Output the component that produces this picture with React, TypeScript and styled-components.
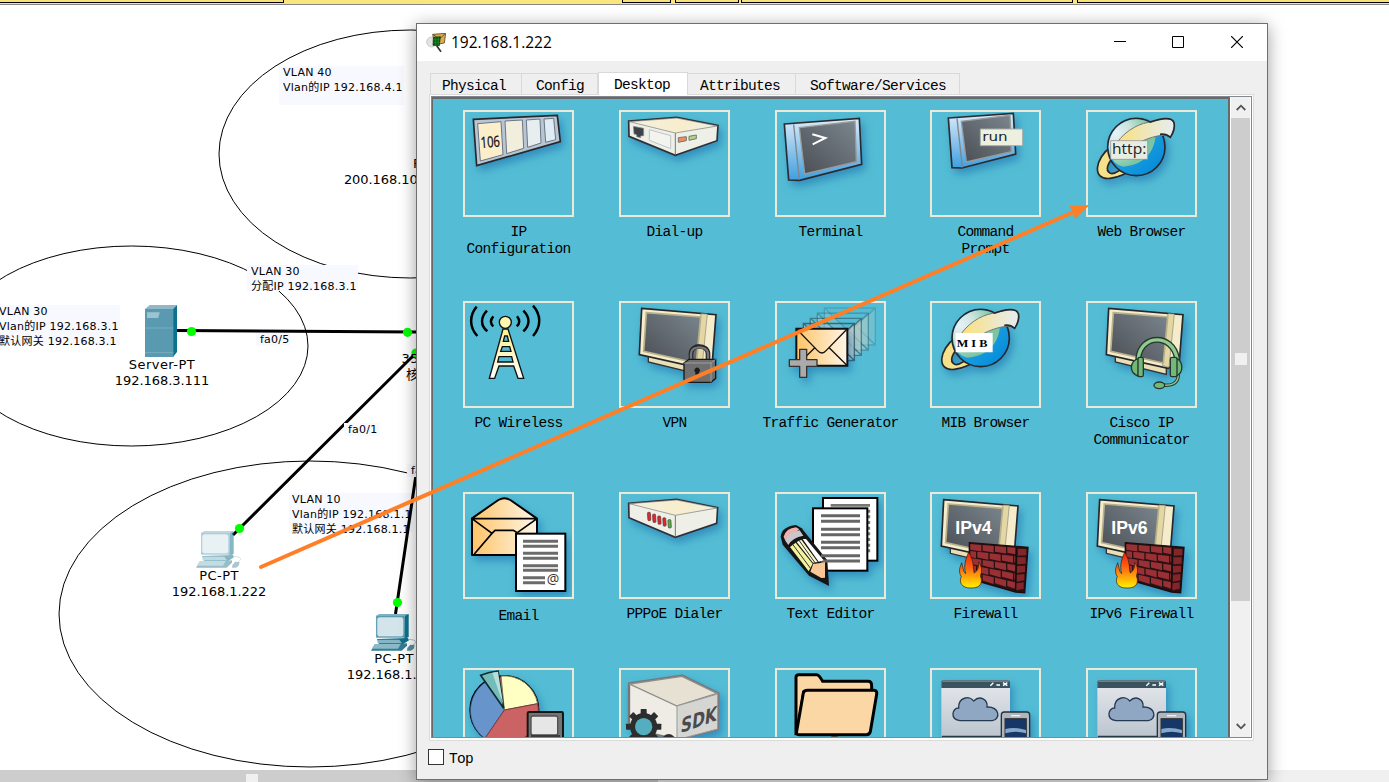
import React from "react";
import styled, { createGlobalStyle } from "styled-components";

const Global = createGlobalStyle`
  * { box-sizing: border-box; }
  html, body { margin: 0; padding: 0; background: #fff; overflow: hidden; }
  svg { display: block; }
`;

const mono = `"Liberation Mono", "Noto Sans CJK SC", monospace`;
const sans = `"DejaVu Sans", "Noto Sans CJK SC", sans-serif`;

const Screen = styled.div`
  position: relative;
  width: 1389px;
  height: 782px;
  overflow: hidden;
  background: #fff;
  display: flex;
  flex-direction: column;
`;

/* ---------- workspace chrome ---------- */
const TopStrip = styled.div`
  display: flex;
  height: 5px;
  flex: none;
  background: #fae57f;
  border-bottom: 1px solid #868686;
`;
const StripSegment = styled.div<{ $w?: number; $gap: number; $left?: boolean }>`
  ${(p) => (p.$w ? `width: ${p.$w}px;` : "flex: 1;")}
  height: 3px;
  margin-right: ${(p) => p.$gap}px;
  background: #f8e07b;
  border-bottom: 1px solid #000;
  border-right: ${(p) => (p.$w ? "1px solid #000" : "none")};
  border-left: ${(p) => (p.$left ? "1px solid #000" : "none")};
`;
const Canvas = styled.div`
  flex: 1;
`;
const BottomScroll = styled.div`
  height: 12px;
  flex: none;
  display: flex;
  background: #f0f0f0;
`;
const BottomThumb = styled.div`
  width: 658px;
  background: #cdcdcd;
  padding: 4px 0 0 246px;
`;
const Grip = styled.div`
  width: 12px;
  height: 12px;
  background: #f0f0f0;
`;

/* ---------- topology ---------- */
const Diagram = styled.svg`
  position: absolute;
  left: 0;
  top: 0;
`;
const Note = styled.div<{ $x: number; $y: number; $w: number; $h: number; $pad?: number }>`
  position: absolute;
  left: ${(p) => p.$x}px;
  top: ${(p) => p.$y}px;
  width: ${(p) => p.$w}px;
  height: ${(p) => p.$h}px;
  padding-left: ${(p) => p.$pad ?? 4}px;
  background: #f8f8ff;
  color: #000;
  font: 11px/15px ${sans};
  letter-spacing: 0.24px;
  white-space: pre;
  & > span {
    display: block;
    margin-top: -1px;
  }
`;
const DeviceName = styled.div<{ $x: number; $y: number; $tight?: boolean }>`
  position: absolute;
  left: ${(p) => p.$x - 70}px;
  top: ${(p) => p.$y}px;
  width: 140px;
  text-align: center;
  color: #000;
  font: 13px/16px ${sans};
  letter-spacing: -0.05px;
  white-space: pre;
  &::first-line {
    letter-spacing: ${(p) => (p.$tight ? "-0.05px" : "0.45px")};
  }
`;
const DeviceIcon = styled.svg<{ $x: number; $y: number; $faded?: boolean }>`
  position: absolute;
  left: ${(p) => p.$x}px;
  top: ${(p) => p.$y}px;
  opacity: ${(p) => (p.$faded ? 0.5 : 1)};
`;

/* ---------- device window ---------- */
const Window = styled.div`
  position: absolute;
  left: 416px;
  top: 23px;
  width: 852px;
  height: 757px;
  border: 1px solid #6f6f6f;
  background: #efefef;
  box-shadow: 0 3px 16px rgba(0, 0, 0, 0.38);
  display: flex;
  flex-direction: column;
`;
const TitleBar = styled.div`
  display: flex;
  align-items: center;
  height: 37px;
  flex: none;
  background: #fff;
  padding-left: 9px;
`;
const Title = styled.div`
  flex: 1;
  padding: 0 0 2px 5px;
  font: 15.5px/20px "Open Sans", "Noto Sans", sans-serif;
  color: #000;
`;
const WindowButton = styled.div<{ $w: number }>`
  width: ${(p) => p.$w}px;
  display: flex;
  justify-content: center;
  padding-bottom: 1px;
`;
const Body = styled.div`
  flex: 1;
  display: flex;
  flex-direction: column;
  padding: 11px 13px 0 12px;
`;
const Tabs = styled.div`
  display: flex;
  align-items: flex-end;
  height: 23px;
  margin-bottom: -1px;
  padding-left: 1px;
  position: relative;
`;
const Tab = styled.div<{ $w: number; $active?: boolean; $first?: boolean; $indent: number }>`
  width: ${(p) => p.$w}px;
  height: ${(p) => (p.$active ? 23 : 21)}px;
  background: ${(p) => (p.$active ? "#fff" : "#efefef")};
  border: 1px solid #d9d9d9;
  border-bottom: none;
  ${(p) => (p.$active || p.$first ? "" : "border-left: none;")}
  margin-bottom: ${(p) => (p.$active ? 0 : 1)}px;
  padding-left: ${(p) => p.$indent}px;
  font: 14.5px/${(p) => (p.$active ? 25 : 24)}px ${mono};
  letter-spacing: -0.7px;
  color: #000;
`;
const Pane = styled.div`
  height: 647px;
  border: 1px solid #dcdcdc;
  background: #fff;
  padding: 1px 1px 2px;
  display: flex;
`;
const ScrollFrame = styled.div`
  flex: 1;
  display: flex;
  border: 1px solid #828790;
`;
const Viewport = styled.div`
  width: 798px;
  overflow: hidden;
  background: #54bdd5;
  border: solid #696969;
  border-width: 2px 2px 0 1px;
`;
const AppGrid = styled.div`
  display: grid;
  grid-template-columns: 156px 156px 155px 156px 111px;
  grid-template-rows: 191px 191px 176px 191px;
  padding: 11px 0 0 30px;
`;
const AppTile = styled.div`
  width: 111px;
`;
const IconBox = styled.div`
  width: 111px;
  height: 107px;
  border: 2px solid #ece9d8;
`;
const AppLabel = styled.div<{ $drop?: boolean }>`
  margin: ${(p) => (p.$drop ? 9 : 7)}px -20px 0;
  text-align: center;
  white-space: pre;
  font: 14.5px/17px ${mono};
  letter-spacing: -0.7px;
  color: #000;
`;
const ScrollBar = styled.div`
  flex: 1;
  display: flex;
  flex-direction: column;
  margin: 0 1px;
  background: #f0f0f0;
`;
const ScrollButton = styled.div`
  height: 21px;
  display: flex;
  align-items: center;
  justify-content: center;
`;
const ScrollThumb = styled.div`
  height: 483px;
  display: flex;
  align-items: center;
  justify-content: center;
  padding-bottom: 2px;
  background: #cdcdcd;
`;
const Spacer = styled.div`
  flex: 1;
`;
const Footer = styled.label`
  display: flex;
  align-items: flex-start;
  height: 16px;
  margin-top: 8px;
  margin-left: -1px;
  gap: 5px;
  font: 14.5px/20px ${mono};
  letter-spacing: -0.7px;
  color: #000;
`;
const CheckBox = styled.span`
  width: 16px;
  height: 16px;
  border: 1px solid #333;
  background: #fff;
`;
const Arrow = styled.svg`
  position: absolute;
  left: 0;
  top: 0;
`;

/* ---------- application drawings ---------- */
const Shaded = styled.g`
  filter: drop-shadow(9px 14px 12px rgba(16, 94, 165, 0.5));
`;
const Defs = styled.svg`
  position: absolute;
`;

const Art = ({ box, children }: { box: string; children: React.ReactNode }) => (
  <svg width="107" height="103" viewBox={box}>{children}</svg>
);

const Gradients = () => (
  <Defs width="0" height="0">
    <defs>
      <linearGradient id="cream" x1="0" y1="0" x2="1" y2="0.3"><stop offset="0" stopColor="#fdeec4" /><stop offset="1" stopColor="#e6f0f6" /></linearGradient>
      <linearGradient id="creamTop" x1="0" y1="0" x2="1" y2="0"><stop offset="0" stopColor="#f4f1e2" /><stop offset=".6" stopColor="#f8edcc" /><stop offset="1" stopColor="#eef1e6" /></linearGradient>
      <linearGradient id="screen" x1="0" y1="1" x2="1" y2="0"><stop offset="0" stopColor="#4b4e54" /><stop offset="1" stopColor="#7b868e" /></linearGradient>
      <linearGradient id="blueEdge" x1="0" y1="0" x2="0" y2="1"><stop offset="0" stopColor="#dcebf8" /><stop offset="1" stopColor="#3f9fe0" /></linearGradient>
      <linearGradient id="ocean" x1="0" y1="0" x2="1" y2="1"><stop offset="0" stopColor="#35b3e6" /><stop offset="1" stopColor="#0087d8" /></linearGradient>
      <radialGradient id="land" cx=".15" cy=".3" r=".9"><stop offset="0" stopColor="#e7f1f8" /><stop offset=".35" stopColor="#cbe4dd" /><stop offset=".8" stopColor="#7cc5a2" /></radialGradient>
      <linearGradient id="ring" x1="0" y1="0" x2="1" y2="0"><stop offset="0" stopColor="#fbe07c" /><stop offset="1" stopColor="#e4edf3" /></linearGradient>
      <linearGradient id="tower" x1="0" y1="0" x2="0" y2="1"><stop offset="0" stopColor="#fff18c" /><stop offset="1" stopColor="#ffffff" /></linearGradient>
      <linearGradient id="letter" x1="0" y1="0" x2="1" y2="0"><stop offset="0" stopColor="#ffc468" /><stop offset="1" stopColor="#fff6e8" /></linearGradient>
      <linearGradient id="flame" x1="0" y1="0" x2="0" y2="1"><stop offset="0" stopColor="#f51c0c" /><stop offset=".45" stopColor="#ff6a10" /><stop offset="1" stopColor="#fff200" /></linearGradient>
      <linearGradient id="page" x1="0" y1="0" x2="0" y2="1"><stop offset="0" stopColor="#e6e9ed" /><stop offset="1" stopColor="#bcc5cf" /></linearGradient>
    </defs>
  </Defs>
);

const IpConfiguration = () => (
  <Art box="105 51 321 309">
    <Shaded><path d="M130 73 382 61 391 140 140 212Z" fill="#b8c6d4" stroke="#28282c" strokeWidth="5" /></Shaded>
    <g stroke="#6b7684" strokeWidth="3">
      <path d="M143 86 213 80 219 179 151 198Z" fill="#fbeecb" /><path d="M225 78 277 75 281 160 230 176Z" fill="#f1eedd" /><path d="M289 75 330 72 333 144 293 157Z" fill="#e6eeef" /><path d="M342 72 371 70 377 134 347 142Z" fill="#dfebf5" />
    </g>
    <text x="0" y="0" transform="translate(153 159) rotate(-4) scale(.73 1)" fontFamily="Open Sans, sans-serif" fontSize="46" fill="#111" stroke="#111">106</text>
  </Art>
);

const Modem = ({ dialer }: { dialer?: boolean }) => (
  <Art box={dialer ? "573 42 321 309" : "573 51 321 309"}>
    <Shaded>
      <path d={dialer ? "M596 70 740 58 863 83 860 130 736 172 597 113Z" : "M596 78 740 67 864 91 861 137 736 181 597 124Z"} fill="#eef0e8" stroke="#303034" strokeWidth="5" />
    </Shaded>
    {dialer ? (
      <>
        <path d="M598 71 740 60 861 84 736 106Z" fill="url(#creamTop)" stroke="#777" strokeWidth="2" />
        <path d="M736 106V170" stroke="#777" strokeWidth="3" />
        {[0, 1, 2, 3, 4].map((i) => <rect key={i} x={653 + i * 15.3} y={97 + i * 5.5} width="9" height="25" rx="3" fill={i === 4 ? "#43b649" : "#dc2831"} stroke="#5c3230" strokeWidth="2" transform={`rotate(-4 ${657 + i * 15} ${110 + i * 5})`} />)}
      </>
    ) : (
      <>
        <path d="M598 80 740 69 862 93 736 114Z" fill="url(#creamTop)" stroke="#777" strokeWidth="2" />
        <path d="M736 114V178" stroke="#777" strokeWidth="3" />
        <path d="M610 94 641 100V122L632 123V128L620 125V119L612 117Z" fill="#3c4248" stroke="#8c9196" strokeWidth="2" />
        <path d="M658 104 722 122V161L658 136Z" fill="#f3f4ee" stroke="#bfc4c8" strokeWidth="3" />
        <path d="M745 128 769 125V137L745 142Z" fill="#f18b58" stroke="#777" strokeWidth="3" />
        <path d="M777 124 799 120V131L777 136Z" fill="#aed581" stroke="#777" strokeWidth="3" />
      </>
    )}
  </Art>
);

const Terminal = () => (
  <Art box="81 51 321 309">
    <Shaded><path d="M103 87 328 70 335 208 149 256 116 255Z" fill="url(#blueEdge)" stroke="#2b2c30" strokeWidth="5" /></Shaded>
    <path d="M131 88 148 254" stroke="#7d8690" strokeWidth="4" />
    <path d="M148 98 315 79 319 200 164 237Z" fill="url(#screen)" stroke="#9a9a9a" strokeWidth="4" />
    <path d="M187 118 226 129 188 148" fill="none" stroke="#fff" strokeWidth="6" />
  </Art>
);

const CommandPrompt = () => (
  <Art box="546 51 321 309">
    <Shaded><path d="M595 69 790 55 797 177 636 219 606 218Z" fill="url(#blueEdge)" stroke="#2b2c30" strokeWidth="5" /></Shaded>
    <path d="M621 70 637 217" stroke="#7d8690" strokeWidth="4" />
    <path d="M634 79 780 61 784 170 649 201Z" fill="url(#screen)" stroke="#9a9a9a" strokeWidth="4" />
    <path d="M691 102H818V152H691Z" fill="#edf0df" stroke="#a7aca8" strokeWidth="3" />
    <text x="697" y="138" fontFamily="DejaVu Sans, sans-serif" fontSize="38" fill="#222" textLength="76" lengthAdjust="spacingAndGlyphs">run</text>
  </Art>
);

const Globe = ({ mib }: { mib?: boolean }) => (
  <Art box={mib ? "83 291 321 309" : "84 291 321 309"}>
    <Shaded>
      <path d="M152 396C105 430 94 496 150 490 176 487 202 474 220 460L211 440C190 460 166 480 151 475 132 466 147 437 164 424Z" fill="#f6e08a" stroke="#26282c" strokeWidth="5" />
      <circle cx="229" cy="396" r="86" fill="url(#ocean)" stroke="#26282c" strokeWidth="5" />
    </Shaded>
    <path d="M146 396A83 83 0 0 1 284 334C296 385 268 450 190 455 162 450 147 425 146 396Z" fill="url(#land)" />
    <path d="M170 384C200 342 245 322 276 321 306 309 336 305 342 323 346 339 338 356 331 367 319 353 270 365 235 384Z" fill="url(#ring)" stroke="#777" strokeWidth="3" />
    <path d="M268 322C306 309 336 305 342 323 346 339 338 356 331 367 320 357 308 357 300 358" fill="none" stroke="#26282c" strokeWidth="5" />
    {mib ? (
      <><path d="M154 381H265V439H154Z" fill="#fff" /><text x="157" y="422" fontFamily="Liberation Serif, serif" fontWeight="700" fontSize="33" textLength="92" lengthAdjust="spacingAndGlyphs">M I B</text></>
    ) : (
      <><path d="M152 377H263V433H152Z" fill="#edf0e4" fillOpacity=".93" stroke="#889" strokeWidth="2" /><text x="156" y="417" fontFamily="Open Sans, sans-serif" fontSize="43" fill="#222" textLength="103" lengthAdjust="spacingAndGlyphs">http:</text></>
    )}
  </Art>
);

const PcWireless = () => (
  <Art box="105 39 321 309">
    <g fill="none" stroke="#000" strokeWidth="7.5">
      <path d="M140 50C118 76 117 111 142 138M171 62C151 82 151 107 172 124M190 79C180 90 181 101 190 109M309 47C334 75 334 110 309 138M280 62C301 82 300 106 280 124M261 79C270 90 270 101 260 109" />
    </g>
    <path fillRule="evenodd" d="M219 117H234L281 265H264L251 228H207L194 265H178ZM224 138 220 154H236L232 138ZM217 170 212 184H243L239 170ZM207 200 203 216H249L245 200Z" fill="url(#tower)" stroke="#111" strokeWidth="4" />
    <circle cx="226" cy="97" r="18" fill="#fff7b1" stroke="#111" strokeWidth="4" />
  </Art>
);

const Monitor = () => (
  <>
    <path d="M87 194 L87 216 240 253 240 225Z" fill="#e9dfb4" stroke="#333" strokeWidth="4" />
    <path d="M67 55 290 74 279 215 245 235 60 194Z" fill="#f4ecca" stroke="#26282c" strokeWidth="5" />
    <path d="M264 72 248 232 228 226 245 71Z" fill="#e3d7a4" stroke="#8c8672" strokeWidth="2" />
    <path d="M81 68 244 81 231 219 73 184Z" fill="url(#screen)" stroke="#b8af8b" strokeWidth="5" />
  </>
);

const Vpn = () => (
  <Art box="573 39 321 309">
    <Shaded><g transform="translate(568)"><Monitor /></g>
      <path d="M783 218V190C785 162 831 163 834 190V218" fill="none" stroke="#26282c" strokeWidth="14" />
      <path d="M783 218V190C785 166 831 166 834 190V218" fill="none" stroke="#777" strokeWidth="7" />
      <path d="M762 219 777 208H857V265L843 277H762Z" fill="#6f6f70" stroke="#18191b" strokeWidth="4" />
    </Shaded>
    <path d="M762 219H843V277M843 219 857 208" fill="none" stroke="#b8b8b8" strokeWidth="2" />
    <path d="M796 247A8 8 0 1 1 807 247L808 263H797Z" fill="#1c1c1c" />
  </Art>
);

const TrafficGenerator = () => (
  <Art box="81 39 321 309">
    {[4, 3, 2, 1].map((i) => (
      <g key={i} transform={`translate(${i * 21} ${-i * 15.5})`} opacity={1 - i * 0.19} fill="#bfcfc8" stroke="#2e5663" strokeWidth="4">
        <path d="M139 116H292V227H139ZM139 116 215 189 292 116M238 174 292 227" />
      </g>
    ))}
    <Shaded>
      <path d="M139 116H292V227H139Z" fill="url(#letter)" stroke="#111" strokeWidth="6" />
      <path d="M139 116 202 181Q216 197 229 181L292 116M139 227 196 172M236 172 292 227" fill="none" stroke="#111" strokeWidth="4" />
      <path d="M149 178H170V209H201V229H170V262H149V229H118V209H149Z" fill="#aaa" stroke="#333" strokeWidth="4" strokeLinejoin="round" />
    </Shaded>
  </Art>
);

const CiscoCommunicator = () => (
  <Art box="1014 39 321 309">
    <Shaded><g transform="translate(1009)"><Monitor /></g></Shaded>
    <g fill="none" stroke="#26382b" strokeLinecap="round">
      <path d="M1165 205C1172 132 1268 130 1281 205" strokeWidth="18" />
      <path d="M1165 205C1172 132 1268 130 1281 205" stroke="#8fca90" strokeWidth="10" />
      <path d="M1285 256C1283 283 1262 288 1235 285" strokeWidth="10" />
      <path d="M1285 256C1283 283 1262 288 1235 285" stroke="#8fca90" strokeWidth="4" />
    </g>
    <g fill="#72b878" stroke="#26382b" strokeWidth="4">
      <path d="M1166 205C1138 214 1136 248 1165 259Z" /><rect x="1164" y="202" width="16" height="58" rx="5" />
      <path d="M1279 205C1300 214 1302 248 1279 258Z" /><rect x="1261" y="202" width="20" height="58" rx="5" />
      <ellipse cx="1228" cy="286" rx="16" ry="10" />
    </g>
  </Art>
);

const Email = () => (
  <Art box="105 42 321 309">
    <Shaded>
      <path d="M126 115 205 60Q223 50 241 60L321 116V225H126Z" fill="url(#letter)" stroke="#000" strokeWidth="6" strokeLinejoin="round" />
      <path d="M126 116H321M126 116 186 160 133 222M186 160 195 151H250L262 158M321 116 262 158" fill="none" stroke="#000" strokeWidth="5" />
      <rect x="258" y="161" width="148" height="172" fill="#fff" stroke="#000" strokeWidth="6" />
    </Shaded>
    <path d="M279 184H384M279 199H384M279 220H384M279 235H384M279 257H384M279 271H384M279 293H345M279 308H345" stroke="#6b6b6b" strokeWidth="9" />
    <text x="350" y="313" fontFamily="Open Sans, sans-serif" fontSize="42" fill="#333">@</text>
  </Art>
);

const TextEditor = () => (
  <Art box="51 42 321 309">
    <Shaded>
      <rect x="189" y="54" width="163" height="188" fill="#fff" stroke="#000" strokeWidth="6" />
      <path d="M212 76H330" stroke="#777" strokeWidth="8" />
      <path d="M327 89V222" stroke="#777" strokeWidth="7" strokeDasharray="9 8" />
      <rect x="159" y="85" width="163" height="187" fill="#fff" stroke="#000" strokeWidth="6" />
      <path d="M62 170Q65 140 108 135L125 145 202 241 207 318 147 287 68 194Z" fill="#151515" />
    </Shaded>
    <path d="M183 107H300M183 124H300M183 148H300M183 164H300M183 187H300M183 203H300M183 227H300M183 243H300" stroke="#666" strokeWidth="9" />
    <path d="M71 170Q78 145 108 142L118 148 76 182Z" fill="#efb1b0" />
    <path d="M76 182Q87 157 119 151L130 167Q98 172 85 195Z" fill="#c8c8cc" />
    <path d="M90 201 107 188 158 251 146 274Z" fill="#f4f39e" />
    <path d="M110 186 124 179 173 246 159 248Z" fill="#fcfacc" />
    <path d="M128 177 138 177 191 241 176 245Z" fill="#fff" />
    <path d="M151 275 160 251Q177 251 195 246L195 293 184 294Z" fill="#f8c795" />
    <path d="M98 193 153 267M117 181 167 251" stroke="#333" strokeWidth="3" />
  </Art>
);

const Bricks = () => (
  <>
    <path d="M628 188 804 202 794 338 767 336 628 296Z" fill="#2a1213" stroke="#1a0d0e" strokeWidth="4" />
    {[0, 1, 2, 3, 4].map((r) =>
      [0, 1, 2, 3, 4].map((c) => {
        const x = 631 + c * 37 - (r % 2 ? 16 : 0);
        const left = Math.max(631, x);
        const right = Math.min(766, x + 33);
        if (right <= left) return null;
        const y = (v: number) => 192 + r * (21 + ((v - 631) / 136) * 5) + ((v - 631) / 136) * 11;
        return <path key={`${r}-${c}`} d={`M${left} ${y(left)}L${right} ${y(right)}V${y(right) + 20}L${left} ${y(left) + 17}Z`} fill="#993035" />;
      })
    )}
    {[0, 1, 2, 3, 4].map((r) => <path key={r} d={`M${773 - r} ${206 + r * 26}L${799 - r * 2} ${207 + r * 25}V${226 + r * 25}L${773 - r} ${227 + r * 26}Z`} fill="#842529" />)}
    <path d="M770 203 766 334" stroke="#111" strokeWidth="4" />
  </>
);

const Firewall = ({ version }: { version: string }) => (
  <Art box="516 42 321 309">
    <Shaded><g transform="translate(484 4)"><Monitor /></g><Bricks /></Shaded>
    <text x="586" y="162" fontFamily="Liberation Sans, sans-serif" fontWeight="700" fontSize="53" fill="#fff" textLength="109" lengthAdjust="spacingAndGlyphs">{version}</text>
    <path d="M626 216C617 240 610 253 617 281 609 276 609 259 605 248 600 262 594 274 604 290 596 305 604 325 633 324 666 325 668 303 661 288 668 270 664 256 656 247 657 265 651 273 643 279 638 264 644 246 626 216Z" fill="url(#flame)" stroke="#2d1607" strokeWidth="2" />
  </Art>
);

const Pie = () => (
  <Art box="0 0 321 309">
    <Shaded><circle cx="118" cy="120" r="102" fill="#b95b5d" stroke="#000" strokeWidth="6" /></Shaded>
    <path d="M118 120 60 205A102 102 0 0 1 66 34Z" fill="#6795cb" stroke="#355b8b" strokeWidth="2" />
    <path d="M118 120 108 18A102 102 0 0 1 218 101Z" fill="#ffffc4" stroke="#777750" strokeWidth="3" />
    <path d="M118 120 218 101A102 102 0 0 1 60 205Z" fill="#cb6365" stroke="#773a3a" strokeWidth="3" />
    <path d="M47 16Q72 5 99 3L116 115Z" fill="#73bcb9" stroke="#102d30" strokeWidth="5" /><path d="M82 8 99 5 115 105Z" fill="#b6dedb" />
    <rect x="188" y="126" width="106" height="90" rx="4" fill="#737373" stroke="#161616" strokeWidth="6" />
    <rect x="198" y="138" width="80" height="57" rx="6" fill="#e6e6e6" stroke="#505050" strokeWidth="4" />
    <path d="M198 198H285" stroke="#333" strokeWidth="5" />
  </Art>
);

const Sdk = () => (
  <Art box="0 0 321 309">
    <Shaded><path d="M24 40 183 17 292 70 290 178 168 209 24 175Z" fill="#eeece5" stroke="#77777a" strokeWidth="7" strokeLinejoin="round" /></Shaded>
    <path d="M26 42 183 19 288 70 168 108Z" fill="#e7e1d3" stroke="#8e8d89" strokeWidth="4" />
    <path d="M168 108 290 72V177L168 209Z" fill="#d5d5d2" stroke="#999" strokeWidth="3" />
    <text transform="matrix(1 -.36 -.1 1 178 190)" fontFamily="DejaVu Sans, sans-serif" fontWeight="700" fontSize="62" fill="#4b4b4d" textLength="108" lengthAdjust="spacingAndGlyphs">SDK</text>
    <g fill="#2c2d2f" transform="translate(68 170)">
      {[0, 45, 90, 135].map((a) => <rect key={a} x="-9" y="-53" width="18" height="106" rx="2" transform={`rotate(${a})`} />)}
      <circle r="41" /><circle r="26" fill="#54aebf" />
      <circle cx="75" cy="42" r="20" />
    </g>
  </Art>
);

const Folder = () => (
  <Art box="0 0 321 309">
    <path d="M57 191V22Q57 14 66 14H119Q126 14 137 34H273Q284 34 284 47V66H80L61 191Z" fill="#fbd7a6" stroke="#000" strokeWidth="9" />
    <path d="M91 61H291Q301 61 299 73L280 185Q278 194 268 194H66Q57 194 59 184L79 69Q81 61 91 61Z" fill="#fbd7a6" stroke="#000" strokeWidth="9" />
    <path d="M163 198H182V205H163Z" fill="#444" />
  </Art>
);

const CloudApp = () => (
  <Art box="0 0 321 309">
    <Shaded>
      <path d="M28 34Q28 31 32 31H230Q234 31 234 35V199H28Z" fill="url(#page)" />
      <path d="M28 34Q28 31 32 31H230Q234 31 234 35V54H28Z" fill="#3b535f" />
      <path d="M30 200H228" stroke="#253b46" strokeWidth="5" />
      <path d="M84 152C53 149 60 113 80 114 78 82 113 75 125 93 144 74 168 89 165 111 203 110 207 147 181 152Z" fill="#8fa7c2" stroke="#263b52" strokeWidth="4" />
      <rect x="208" y="126" width="85" height="105" rx="9" fill="#aeb7bf" stroke="#263139" strokeWidth="4" />
    </Shaded>
    <path d="M30 34H232" stroke="#768b94" strokeWidth="3" />
    <path d="M175 47 184 38M193 45H204M213 38 226 47M226 38 213 47" stroke="#fff" strokeWidth="4" />
    <path d="M237 137H265" stroke="#eef2f4" strokeWidth="4" />
    <rect x="219" y="146" width="64" height="70" fill="#173867" stroke="#333" strokeWidth="3" />
    <path d="M220 177Q249 170 282 180V190Q250 180 220 190Z" fill="#83a9cb" />
  </Art>
);

const PcDevice = ({ x, y, faded }: { x: number; y: number; faded?: boolean }) => (
  <DeviceIcon $x={x} $y={y} $faded={faded} width="48" height="39" viewBox="432 240 144 117">
    <path d="M456 318 549 315 552 322 535 333H462Z" fill="#126f87" />
    <path d="M457 320H523L531 331H458Z" fill="#84b6c6" />
    <path d="M450 333 525 333 546 331V338L530 353H438Z" fill="#317d94" /><path d="M450 333H527L519 347H440Z" fill="#8bb9c7" />
    <path d="M453 248 463 243H551L541 314H453Z" fill="#7eb0c1" /><path d="M551 244V312L538 318 540 248Z" fill="#0b718b" />
    <rect x="454" y="249" width="85" height="64" rx="3" fill="#5b9bb0" />
    <rect x="458" y="254" width="76" height="55" rx="5" fill="#d3e4eb" stroke="#dcebf0" strokeWidth="2" />
    <path d="M551 319Q573 320 572 328 570 333 563 336" fill="none" stroke="#a9c8d2" strokeWidth="3" />
    <path d="M547 345 556 335 569 337 566 347 558 353H546Z" fill="#568fa4" />
  </DeviceIcon>
);

const apps: { label: string; icon: React.ReactNode; drop?: boolean }[] = [
  { label: "IP\nConfiguration", icon: <IpConfiguration /> },
  { label: "Dial-up", icon: <Modem /> },
  { label: "Terminal", icon: <Terminal /> },
  { label: "Command\nPrompt", icon: <CommandPrompt /> },
  { label: "Web Browser", icon: <Globe /> },
  { label: "PC Wireless", icon: <PcWireless /> },
  { label: "VPN", icon: <Vpn /> },
  { label: "Traffic Generator", icon: <TrafficGenerator /> },
  { label: "MIB Browser", icon: <Globe mib /> },
  { label: "Cisco IP\nCommunicator", icon: <CiscoCommunicator /> },
  { label: "Email", icon: <Email />, drop: true },
  { label: "PPPoE Dialer", icon: <Modem dialer /> },
  { label: "Text Editor", icon: <TextEditor /> },
  { label: "Firewall", icon: <Firewall version="IPv4" /> },
  { label: "IPv6 Firewall", icon: <Firewall version="IPv6" /> },
  { label: "", icon: <Pie /> },
  { label: "", icon: <Sdk /> },
  { label: "", icon: <Folder /> },
  { label: "", icon: <CloudApp /> },
  { label: "", icon: <CloudApp /> },
];

const Topology = () => (
  <>
    <Diagram width="417" height="770" viewBox="0 0 417 770" fill="none" stroke="#000" strokeWidth="1">
      <ellipse cx="410.5" cy="154" rx="191.5" ry="124" />
      <ellipse cx="131.5" cy="346" rx="176.5" ry="100" />
      <ellipse cx="310" cy="614" rx="251" ry="153" />
    </Diagram>
    <Note $x={279} $y={66} $w={125} $h={39}><span>{"VLAN 40\nVlan的IP 192.168.4.1"}</span></Note>
    <Note $x={247} $y={265} $w={111} $h={26}><span>{"VLAN 30\n分配IP 192.168.3.1"}</span></Note>
    <Note $x={-4} $y={305} $w={124} $h={40} $pad={3}><span>{"VLAN 30\nVlan的IP 192.168.3.1\n默认网关 192.168.3.1"}</span></Note>
    <Note $x={289} $y={493} $w={124} $h={40} $pad={3}><span>{"VLAN 10\nVlan的IP 192.168.1.1\n默认网关 192.168.1.1"}</span></Note>
    <Diagram width="417" height="770" viewBox="0 0 417 770" stroke="#000" strokeWidth="3">
      <path d="M176 330.5 417 332M417 352 233 535M417 468 395.5 614" fill="none" />
      <g fill="#0f0" stroke="none">
        <circle cx="191.5" cy="331.5" r="4.6" /><circle cx="407.5" cy="332.3" r="4.6" /><circle cx="416" cy="353" r="4.6" /><circle cx="239.5" cy="528.5" r="4.6" /><circle cx="397.5" cy="602.5" r="4.6" />
      </g>
    </Diagram>
    <Note $x={256} $y={333} $w={34} $h={13}><span>fa0/5</span></Note>
    <Note $x={344} $y={423} $w={35} $h={13}><span>fa0/1</span></Note>
    <Note $x={407} $y={464} $w={35} $h={13}><span>fa0/2</span></Note>
    <DeviceIcon $x={145} $y={305} width="32" height="52" viewBox="435 195 96 156">
      <path d="M435 207 449 195H531L519 207Z" fill="#8fb9c8" /><path d="M519 207 531 195V336L519 351Z" fill="#0a728c" />
      <path d="M435 207H520V351H435Z" fill="#5a9ab0" /><path d="M435 264H520M435 338H520" stroke="#79adbf" strokeWidth="3" />
      <path d="M441 217H479L475 234H441Z" fill="#9bc3d0" />
    </DeviceIcon>
    <DeviceName $x={162} $y={357}>{"Server-PT\n192.168.3.111"}</DeviceName>
    <DeviceName $x={436} $y={156}>Router</DeviceName>
    <DeviceName $x={387} $y={172} $tight>200.168.10.1</DeviceName>
    <DeviceName $x={419} $y={351}>{"3560\n核心"}</DeviceName>
    <PcDevice x={194} y={530} faded />
    <DeviceName $x={219} $y={568}>{"PC-PT\n192.168.1.222"}</DeviceName>
    <PcDevice x={369} y={613} />
    <DeviceName $x={394} $y={651}>{"PC-PT\n192.168.1.223"}</DeviceName>
  </>
);

export default function App() {
  return (
    <Screen>
      <Global />
      <Gradients />
      <TopStrip>
        <StripSegment $w={284} $gap={338} />
        <StripSegment $w={49} $gap={4} $left />
        <StripSegment $w={64} $gap={2} $left />
        <StripSegment $w={332} $gap={4} $left />
        <StripSegment $gap={0} $left />
      </TopStrip>
      <Canvas><Topology /></Canvas>
      <BottomScroll><BottomThumb><Grip /></BottomThumb></BottomScroll>

      <Window>
        <TitleBar>
          <svg width="20" height="20" viewBox="32 52 60 60">
            <path d="M52 56 91 53 87 82 57 88Z" fill="#dcae4e" stroke="#33260d" strokeWidth="2" /><path d="M54 57 72 70 89 55" fill="none" stroke="#423411" strokeWidth="2" />
            <circle cx="49" cy="79" r="15" fill="#dfe3e1" stroke="#b6bab8" strokeWidth="2" />
            <path d="M54 65 75 63 72 90 53 89Z" fill="#086012" stroke="#02280a" strokeWidth="2" /><path d="M61 64V90M69 64V89M53 72H74M53 81H73" stroke="#29942e" strokeWidth="1.5" />
            <path d="M64 90 77 108" stroke="#333" strokeWidth="5" />
          </svg>
          <Title>192.168.1.222</Title>
          <WindowButton $w={58}><svg width="12" height="12"><path d="M0 5.5H12" stroke="#000" /></svg></WindowButton>
          <WindowButton $w={58}><svg width="12" height="12"><path d="M.5.5H11.5V11.5H.5Z" fill="none" stroke="#000" /></svg></WindowButton>
          <WindowButton $w={60}><svg width="12" height="12"><path d="M0 0 12 12M12 0 0 12" stroke="#000" strokeWidth="1.2" /></svg></WindowButton>
        </TitleBar>
        <Body>
          <Tabs>
            <Tab $w={92} $indent={11} $first>Physical</Tab>
            <Tab $w={76} $indent={14}>Config</Tab>
            <Tab $w={90} $indent={15} $active>Desktop</Tab>
            <Tab $w={108} $indent={12}>Attributes</Tab>
            <Tab $w={164} $indent={14}>Software/Services</Tab>
          </Tabs>
          <Pane>
            <ScrollFrame>
              <Viewport>
                <AppGrid>
                  {apps.map((a, i) => (
                    <AppTile key={i}>
                      <IconBox>{a.icon}</IconBox>
                      {a.label && <AppLabel $drop={a.drop}>{a.label}</AppLabel>}
                    </AppTile>
                  ))}
                </AppGrid>
              </Viewport>
              <ScrollBar>
                <ScrollButton><svg width="10" height="7"><path d="M.7 6 5 1.7 9.3 6" fill="none" stroke="#555" strokeWidth="1.8" /></svg></ScrollButton>
                <ScrollThumb><Grip /></ScrollThumb>
                <Spacer />
                <ScrollButton><svg width="10" height="7"><path d="M.7 1 5 5.3 9.3 1" fill="none" stroke="#555" strokeWidth="1.8" /></svg></ScrollButton>
              </ScrollBar>
            </ScrollFrame>
          </Pane>
          <Footer><CheckBox />Top</Footer>
        </Body>
      </Window>

      <Arrow width="1389" height="782" viewBox="0 0 1389 782">
        <path d="M261 567 1076 211" stroke="#ff7f27" strokeWidth="4" strokeLinecap="round" />
        <path d="M1089.5 205 1069 206 1073.5 212 1075 219.5Z" fill="#ff7f27" />
      </Arrow>
    </Screen>
  );
}
